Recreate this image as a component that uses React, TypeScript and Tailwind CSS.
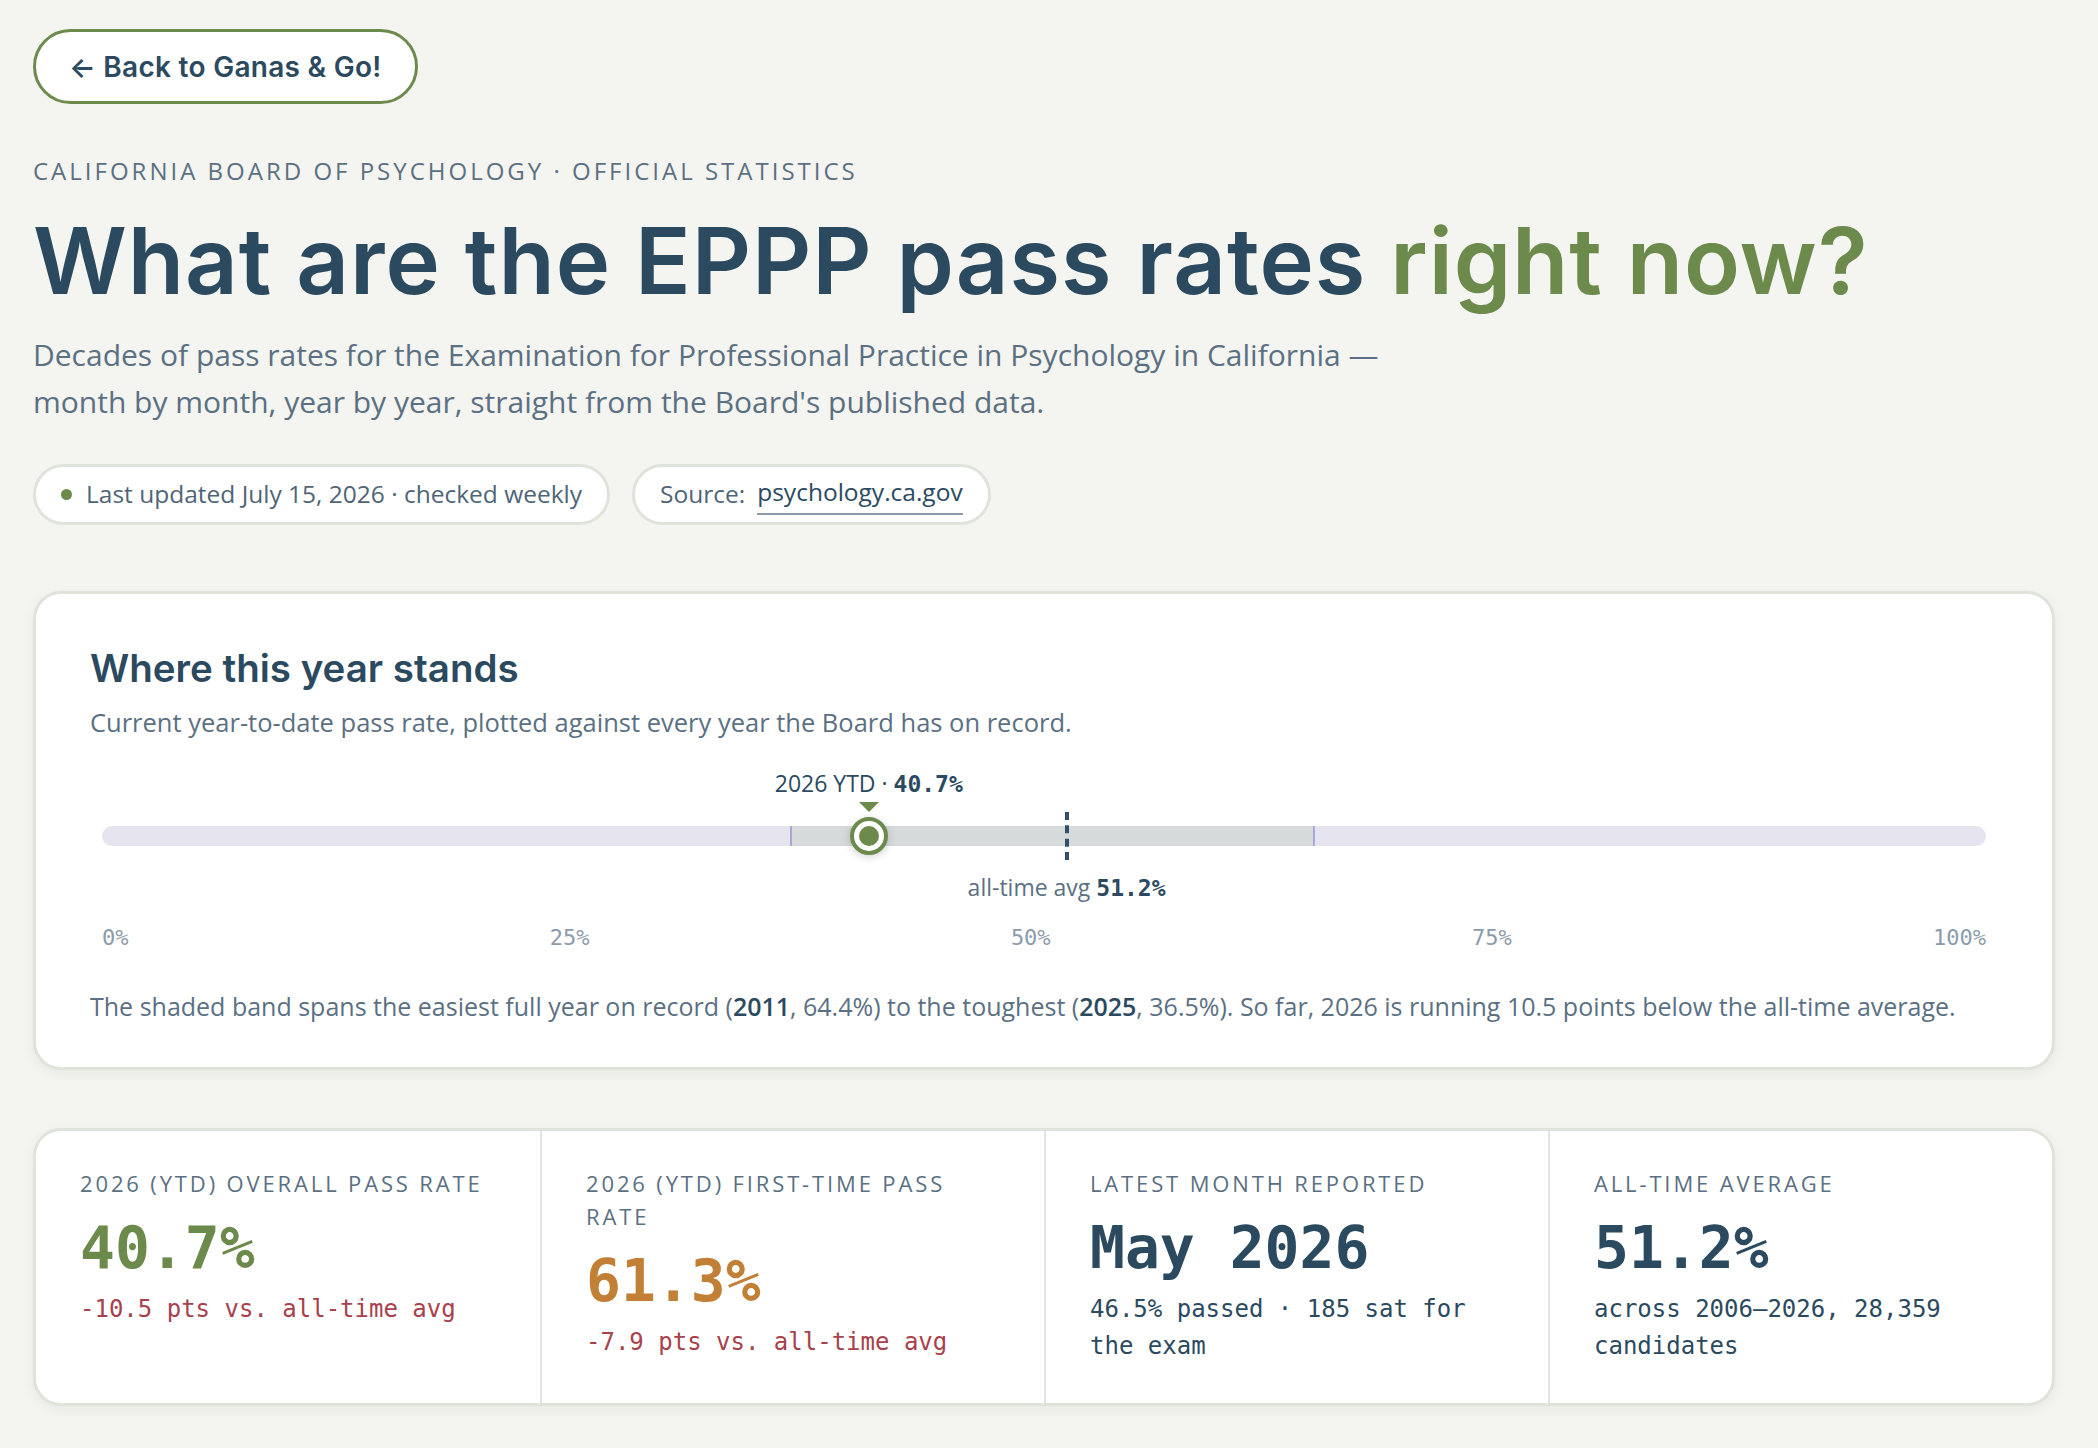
import type { ReactNode } from 'react'

const heading = "font-['Inter','Noto_Sans',sans-serif]"
const body = "font-['Open_Sans','Noto_Sans',sans-serif]"
const mono = "font-['DejaVu_Sans_Mono','Liberation_Mono',monospace]"

const TRACK_MIN = 0
const TRACK_MAX = 100

const stats = {
  ytd: 40.7,
  firstTime: 61.3,
  average: 51.2,
  easiest: { year: 2011, rate: 64.4 },
  toughest: { year: 2025, rate: 36.5 },
}

function pct(value: number) {
  return `${((value - TRACK_MIN) / (TRACK_MAX - TRACK_MIN)) * 100}%`
}

function Pill({ children }: { children: ReactNode }) {
  return (
    <div className="flex h-[61px] items-center rounded-full border-[3px] border-[#dfe3da] bg-white px-[25px] text-[24.5px] text-[#4f6577]">
      {children}
    </div>
  )
}

function RangeChart() {
  return (
    <div className="mx-[12px]">
      <div className="relative h-[150px]">
        {/* current year label + pointer */}
        <div
          className="absolute top-[6px] -translate-x-1/2 whitespace-nowrap text-[23px] leading-[34px] text-[#2b4a5f]"
          style={{ left: pct(stats.ytd) }}
        >
          2026 YTD · <span className={`${mono} font-bold`}>{stats.ytd}%</span>
        </div>
        <div
          className="absolute top-[42px] h-0 w-0 -translate-x-1/2 border-x-[10px] border-t-[10px] border-x-transparent border-t-[#6b8a4b]"
          style={{ left: pct(stats.ytd) }}
        />

        {/* track with record band */}
        <div className="absolute inset-x-0 top-[66px] h-[20px] rounded-full bg-[#e6e5ef]" />
        <div
          className="absolute top-[66px] h-[20px] border-x-2 border-[#a9a9d8] bg-[#d6dadb]"
          style={{ left: pct(stats.toughest.rate), width: `calc(${pct(stats.easiest.rate)} - ${pct(stats.toughest.rate)})` }}
        />

        {/* all-time average */}
        <div
          className="absolute top-[52px] h-[48px] w-0 -translate-x-1/2 border-l-4 border-dashed border-[#35516a]"
          style={{ left: pct(stats.average) }}
        />
        <div
          className="absolute top-[110px] -translate-x-1/2 whitespace-nowrap text-[23px] leading-[34px] text-[#5b7083]"
          style={{ left: pct(stats.average) }}
        >
          all-time avg <span className={`${mono} font-bold text-[#2b4a5f]`}>{stats.average}%</span>
        </div>

        {/* marker */}
        <div
          className="absolute top-[57px] flex h-[38px] w-[38px] -translate-x-1/2 items-center justify-center rounded-full border-4 border-[#6b8a4b] bg-white shadow-[0_2px_8px_rgba(0,0,0,0.18)]"
          style={{ left: pct(stats.ytd) }}
        >
          <div className="h-[20px] w-[20px] rounded-full bg-[#6b8a4b]" />
        </div>
      </div>

      <div className={`${mono} mt-[13px] flex justify-between text-[22px] leading-[30px] text-[#8c9bab]`}>
        <span>0%</span>
        <span>25%</span>
        <span>50%</span>
        <span>75%</span>
        <span>100%</span>
      </div>
    </div>
  )
}

type StatProps = {
  label: string
  value: string
  valueClass: string
  note: string
  noteClass: string
}

function Stat({ label, value, valueClass, note, noteClass }: StatProps) {
  return (
    <div className="border-l-2 border-[#e2e5de] px-[44px] pt-[36px] pb-[38px] first:border-l-0">
      <div className="text-[22px] uppercase leading-[33px] tracking-[0.13em] text-[#5b7083]">{label}</div>
      <div className={`${mono} mt-[14px] text-[58px] font-bold leading-[68px] ${valueClass}`}>{value}</div>
      <div className={`${mono} mt-[9px] text-[24px] leading-[37px] ${noteClass}`}>{note}</div>
    </div>
  )
}

export default function App() {
  return (
    <div className={`${body} min-h-screen bg-[#f4f4f0] pt-[29px] pr-[43px] pb-[43px] pl-[33px]`}>
      <a
        href="#"
        className={`${heading} inline-flex h-[75px] items-center rounded-full border-[3px] border-[#6b8a4b] bg-white px-[33px] text-[28px] font-semibold tracking-[0.01em] text-[#2b4a5f]`}
      >
        ← Back to Ganas &amp; Go!
      </a>

      <p className="mt-[52px] text-[24px] uppercase leading-[30px] tracking-[0.125em] text-[#5b7083]">
        California Board of Psychology · Official Statistics
      </p>
      <h1 className={`${heading} mt-[22px] text-[92px] font-semibold leading-[1.15] tracking-[0.01em] text-[#2b4a5f]`}>
        What are the EPPP pass rates <span className="text-[#6b8a4b]">right now?</span>
      </h1>
      <p className="mt-[17px] max-w-[1400px] text-[30px] leading-[47px] text-[#5b7083]">
        Decades of pass rates for the Examination for Professional Practice in Psychology in California — month by month, year by year, straight from the Board's published data.
      </p>

      <div className="mt-[39px] flex gap-[22px]">
        <Pill>
          <span className="mr-[14px] h-[11px] w-[11px] rounded-full bg-[#6b8a4b]" />
          Last updated July 15, 2026 · checked weekly
        </Pill>
        <Pill>
          Source:
          <a href="#" className="ml-[12px] border-b-2 border-[#8c9bab] pb-[2px] text-[#2b4a5f]">
            psychology.ca.gov
          </a>
        </Pill>
      </div>

      <section className="mt-[66px] rounded-[28px] border-[3px] border-[#dfe3da] bg-white px-[54px] pt-[50px] pb-[43px] shadow-[0_4px_14px_rgba(40,50,40,0.06)]">
        <h2 className={`${heading} text-[38.5px] font-semibold leading-[48px] text-[#2b4a5f]`}>Where this year stands</h2>
        <p className="mt-[12px] text-[25.5px] leading-[36px] text-[#5b7083]">
          Current year-to-date pass rate, plotted against every year the Board has on record.
        </p>

        <div className="mt-[20px]">
          <RangeChart />
        </div>

        <p className="mt-[35px] text-[25px] leading-[36px] text-[#5b7083]">
          The shaded band spans the easiest full year on record (
          <strong className="font-semibold text-[#2b4a5f]">{stats.easiest.year}</strong>, {stats.easiest.rate}%) to the
          toughest (<strong className="font-semibold text-[#2b4a5f]">{stats.toughest.year}</strong>, {stats.toughest.rate}
          %). So far, 2026 is running 10.5 points below the all-time average.
        </p>
      </section>

      <section className="mt-[58px] grid grid-cols-4 overflow-hidden rounded-[28px] border-[3px] border-[#dfe3da] bg-white shadow-[0_4px_14px_rgba(40,50,40,0.06)]">
        <Stat
          label="2026 (YTD) overall pass rate"
          value="40.7%"
          valueClass="text-[#6b8a4b]"
          note="-10.5 pts vs. all-time avg"
          noteClass="text-[#a8414c]"
        />
        <Stat
          label="2026 (YTD) first-time pass rate"
          value="61.3%"
          valueClass="text-[#c27f36]"
          note="-7.9 pts vs. all-time avg"
          noteClass="text-[#a8414c]"
        />
        <Stat
          label="Latest month reported"
          value="May 2026"
          valueClass="text-[#2b4a5f]"
          note="46.5% passed · 185 sat for the exam"
          noteClass="text-[#2b4a5f]"
        />
        <Stat
          label="All-time average"
          value="51.2%"
          valueClass="text-[#2b4a5f]"
          note="across 2006–2026, 28,359 candidates"
          noteClass="text-[#2b4a5f]"
        />
      </section>
    </div>
  )
}
